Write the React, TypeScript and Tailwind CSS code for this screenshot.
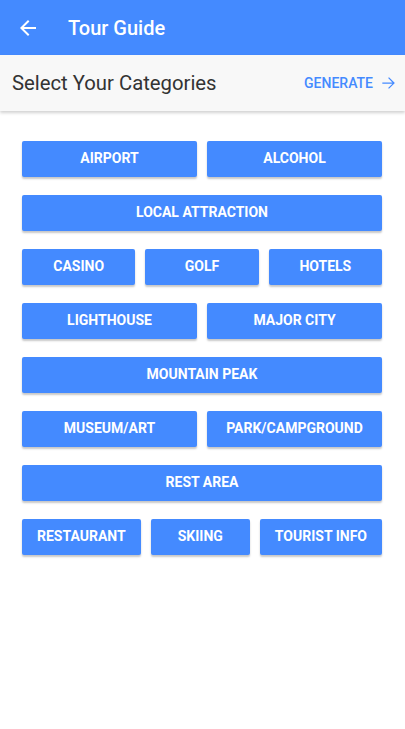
import React from "react";

const rows: string[][] = [
  ["AIRPORT", "ALCOHOL"],
  ["LOCAL ATTRACTION"],
  ["CASINO", "GOLF", "HOTELS"],
  ["LIGHTHOUSE", "MAJOR CITY"],
  ["MOUNTAIN PEAK"],
  ["MUSEUM/ART", "PARK/CAMPGROUND"],
  ["REST AREA"],
  ["RESTAURANT", "SKIING", "TOURIST INFO"],
];

export default function App() {
  return (
    <div
      className="w-[405px] h-[729px] bg-white flex flex-col"
      style={{ fontFamily: "Roboto, 'Noto Sans', sans-serif" }}
    >
      <div className="h-[55px] bg-[#448aff] flex items-center shrink-0">
        <div className="w-[68px] flex items-center pl-[16px]">
          <svg width="24" height="24" viewBox="0 0 24 24" fill="white">
            <path d="M20 11H7.83l5.59-5.59L12 4l-8 8 8 8 1.41-1.41L7.83 13H20v-2z" />
          </svg>
        </div>
        <div className="text-white text-[20px] font-medium">Tour Guide</div>
      </div>
      <div className="h-[56px] bg-[#f8f8f8] flex items-center justify-between pl-[12px] pr-[6px] shadow-[0_2px_3px_rgba(0,0,0,0.18)] relative z-10 shrink-0">
        <div className="text-[20.3px] text-[#333333]">Select Your Categories</div>
        <div className="flex items-center text-[#448aff] text-[14px] font-medium">
          <span>GENERATE</span>
          <svg width="20" height="20" viewBox="0 0 24 24" fill="#448aff" className="ml-[6px]">
            <path d="M12 4l-1.06 1.06L16.13 10.25H4v1.5h12.13l-5.19 5.19L12 18l7-7z" transform="translate(0 1)" />
          </svg>
        </div>
      </div>
      <div className="flex flex-col gap-[18px] pl-[22px] pr-[23px] pt-[30px]">
        {rows.map((row, i) => (
          <div key={i} className="flex gap-[10px]">
            {row.map((label) => (
              <button
                key={label}
                className="flex-1 h-[36px] px-[15px] pb-[1px] whitespace-nowrap bg-[#448aff] text-white text-[14px] font-bold rounded-[2px] shadow-[0_2px_2px_rgba(0,0,0,0.22)]"
              >
                {label}
              </button>
            ))}
          </div>
        ))}
      </div>
    </div>
  );
}
